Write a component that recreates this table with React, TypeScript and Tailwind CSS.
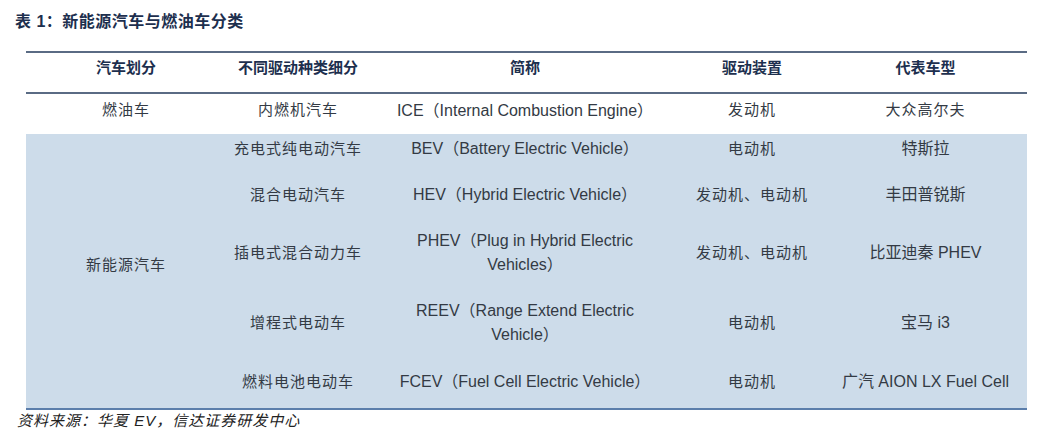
import React from "react";

const font = { fontFamily: '"Liberation Sans", "Noto Sans CJK SC", sans-serif' };

function Cell({ children, cls = "" }: { children: React.ReactNode; cls?: string }) {
  return <div className={`flex items-center justify-center text-center ${cls}`}>{children}</div>;
}

const rows: { sub: string; abbr: React.ReactNode; dev: string; model: string; h: string }[] = [
  { sub: "充电式纯电动汽车", abbr: "BEV（Battery Electric Vehicle）", dev: "电动机", model: "特斯拉", h: "h-[30px]" },
  { sub: "混合电动汽车", abbr: "HEV（Hybrid Electric Vehicle）", dev: "发动机、电动机", model: "丰田普锐斯", h: "h-[62px]" },
  {
    sub: "插电式混合动力车",
    abbr: (
      <>
        PHEV（Plug in Hybrid Electric
        <br />
        Vehicles）
      </>
    ),
    dev: "发动机、电动机",
    model: "比亚迪秦 PHEV",
    h: "h-[54px]",
  },
  {
    sub: "增程式电动车",
    abbr: (
      <>
        REEV（Range Extend Electric
        <br />
        Vehicle）
      </>
    ),
    dev: "电动机",
    model: "宝马 i3",
    h: "h-[86px]",
  },
  { sub: "燃料电池电动车", abbr: "FCEV（Fuel Cell Electric Vehicle）", dev: "电动机", model: "广汽 AION LX Fuel Cell", h: "h-[32px]" },
];

export default function App() {
  return (
    <div className="w-[1048px] h-[444px] bg-white relative overflow-hidden" style={font}>
      <div className="pl-[15px] pt-[11px] h-[51px] text-[16px] font-bold text-[#1d2f4e] leading-[22px] tracking-[0.5px]">
        表 1：新能源汽车与燃油车分类
      </div>
      <div className="ml-[26px] w-[1001px]">
        <div className="h-[2px] bg-[#5a6b84]" />
        <div className="grid grid-cols-[200px_144px_310px_144px_203px] h-[39px] pb-[9px] text-[15px] font-bold text-[#1d2f4e]">
          <Cell>汽车划分</Cell>
          <Cell>不同驱动种类细分</Cell>
          <Cell>简称</Cell>
          <Cell>驱动装置</Cell>
          <Cell>代表车型</Cell>
        </div>
        <div className="h-[2px] bg-[#5a6b84]" />
        <div className="grid grid-cols-[200px_144px_310px_144px_203px] h-[40px] pb-[7px] text-[15px] text-[#333a44]">
          <Cell cls="tracking-[1px]">燃油车</Cell>
          <Cell cls="tracking-[1px]">内燃机汽车</Cell>
          <Cell cls="text-[16px]">ICE（Internal Combustion Engine）</Cell>
          <Cell cls="tracking-[1px]">发动机</Cell>
          <Cell cls="tracking-[1px]">大众高尔夫</Cell>
        </div>
        <div className="bg-[#cddcea] flex text-[15px] text-[#333a44] pb-[10px]">
          <div className="w-[200px] flex items-center justify-center tracking-[1px] pb-[2px]">新能源汽车</div>
          <div className="flex-1 flex flex-col">
            {rows.map((r, i) => (
              <div key={i} className={`grid grid-cols-[144px_310px_144px_203px] ${r.h}`}>
                <Cell cls="tracking-[1px]">{r.sub}</Cell>
                <Cell cls="text-[16px] leading-[24px]">{r.abbr}</Cell>
                <Cell cls="tracking-[1px]">{r.dev}</Cell>
                <Cell cls="text-[16px]">{r.model}</Cell>
              </div>
            ))}
          </div>
        </div>
        <div className="h-[2px] bg-[#5b7eab]" />
      </div>
      <div className="pl-[17px] pt-[1px] text-[15px] italic text-[#222] leading-[20px] tracking-[1px]">
        资料来源：华夏 EV，信达证券研发中心
      </div>
    </div>
  );
}
